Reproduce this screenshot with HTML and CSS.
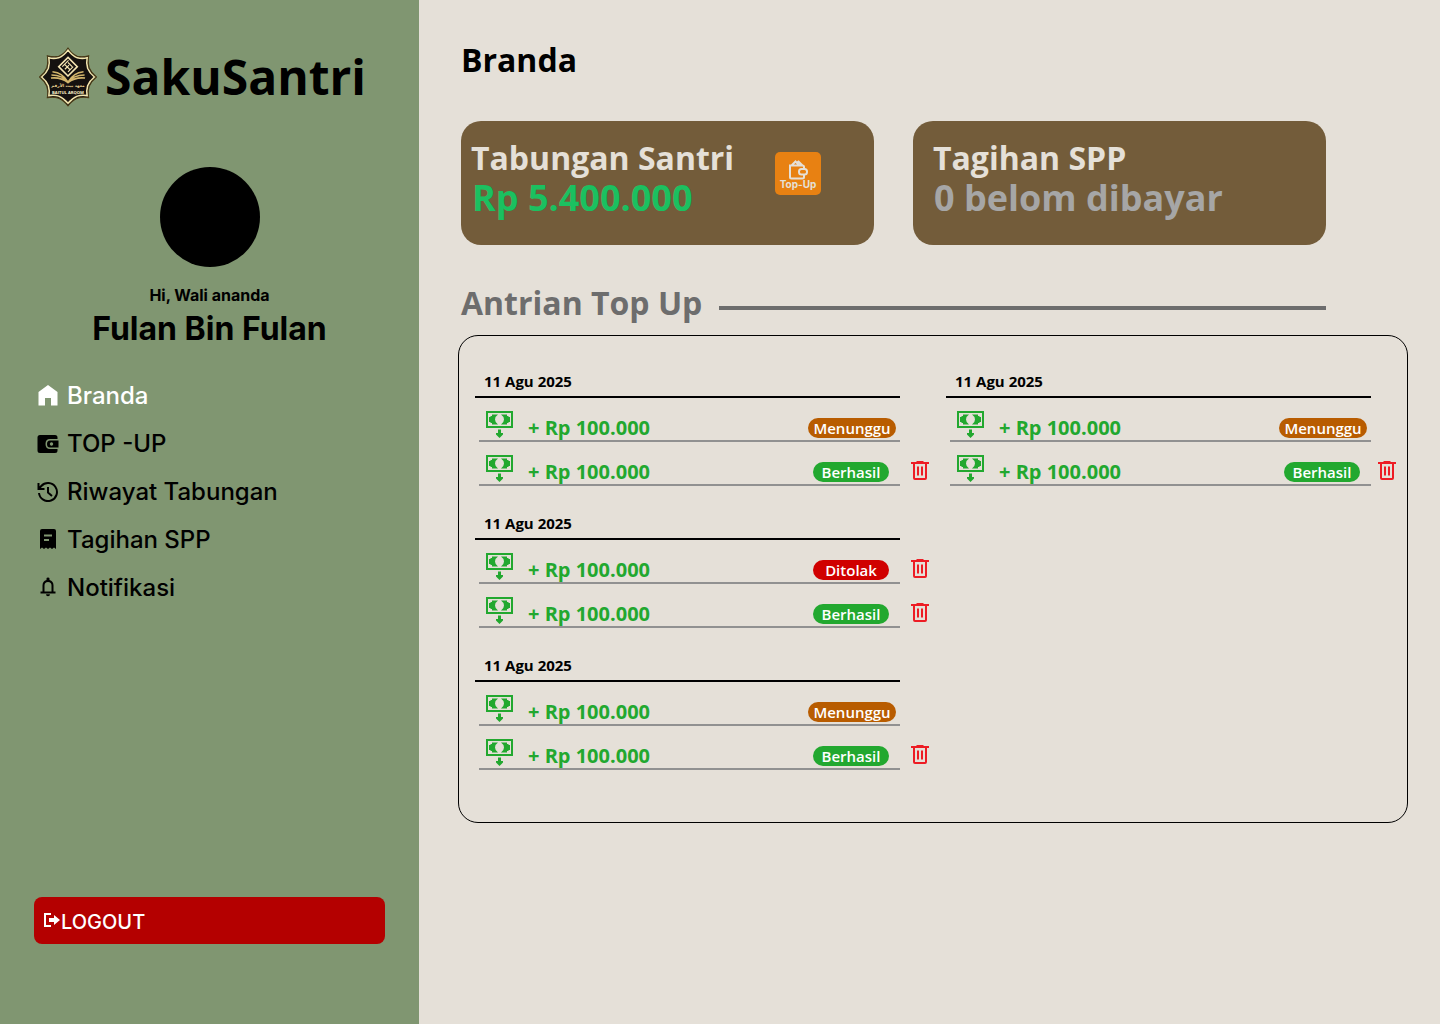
FILE: index.html
```html
<!DOCTYPE html>
<html lang="id">
<head>
<meta charset="utf-8">
<meta name="viewport" content="width=device-width, initial-scale=1">
<title>SakuSantri - Branda</title>
<link rel="stylesheet" href="styles.css">
</head>
<body>
<svg class="sprite" aria-hidden="true">
  <symbol id="money" viewBox="0 0 27 27">
    <path fill-rule="evenodd" d="M0 0h27v17H0zM2 2v13h23V2z"/>
    <path d="M6 3.500h6Q9 5.500 9 8.500T12 13.500H6V12H4.500V11H3V6h1.500V5H6zM21 3.500h-6q3 2 3 5t-3 5h6V12h1.500v-1H24V6h-1.500V5H21z"/>
    <path d="M12 18.500h3V22h2v1.500L13.500 27 10 23.500V22h2z"/>
  </symbol>
  <symbol id="trash" viewBox="0 0 18 19">
    <path fill-rule="evenodd" d="M0 1h5.500V0h7v1H18v2h-2v14q0 2-2 2H4q-2 0-2-2V3H0zM4 3v14h10V3z"/>
    <path d="M6 5.500h2v9H6zM10 5.500h2v9h-2z"/>
  </symbol>
</svg>
<div class="app">
  <aside class="sidebar">
    <div class="brand">
      <svg class="brand-logo" viewBox="0 0 56 58" role="img" aria-label="Baitul Arqom">
        <path d="M28 1Q32 7 37 9q5 1 11-.5-1 6 .5 11.500 2 5 7 9-5 4-7 9-1.500 5-.5 11-6-1-11 .5-5 2-9 7.500-4-5.500-9-7.500-5-1.500-11-.5 1-6-.5-11-2-5-7-9 5-4 7-9Q9 15 8 8.500 14 10 19 9q5-2 9-8z" fill="#15110f" stroke="#4a3b16" stroke-width="1"/>
        <path d="M28 3Q32 8.500 37 10.500q5 1 9.500 0-1 5 .5 10 2 5 6.500 8.500-4.500 3.500-6.500 8.500-1.500 5-.5 9.500-5-1-9.500.5-5 2-9 7-4-5-9-7-4.500-1.500-9.500-.5 1-4.500-.5-9.500-2-5-6.500-8.500 4.500-3.500 6.500-8.500 1.500-5 .5-10 4.500 1 9.500 0 5-2 9-7.500z" fill="none" stroke="#f4e6ad" stroke-width="1.500"/>
        <g fill="none" stroke="#f5e5b3" stroke-width="1.500">
          <path d="M28 10l9 9-9 9-9-9z"/>
          <path d="M22.500 19l6-6M25 21.500l4-4M28 24l5-5M28 15l4 4M25 17l5 5" stroke-width="1.100"/>
          <path d="M13 24q10 1 15 10 5-9 15-10M12 27q11 0 16 7 5-7 16-7M11.500 30q10-1 16.500 4.500Q34.500 29 44.500 30" stroke="#d3b56c"/>
        </g>
        <text class="logo-arabic" x="28" y="39">معهد بيت الأرقم</text>
        <text class="logo-latin" x="28" y="45">BAITUL ARQOM</text>
      </svg>
      <span class="brand-name">SakuSantri</span>
    </div>
    <div class="profile">
      <div class="avatar"></div>
      <p class="greeting">Hi, Wali ananda</p>
      <p class="user-name">Fulan Bin Fulan</p>
    </div>
    <nav class="nav">
      <a class="nav-link active" href="#branda">
        <svg viewBox="0 0 22 22"><path d="M11 1L1.500 8v13.500h6.500V14h6v7.500h6.500V8z"/></svg>Branda</a>
      <a class="nav-link" href="#top-up">
        <svg viewBox="0 0 22 22"><path d="M3 3h15q2.500 0 2.500 2.500V7H13q-4.500 0-4.500 5t4.500 5h7.500v1.500q0 2.500-2.500 2.500H3q-2.500 0-2.500-2.500v-13Q.5 3 3 3zM13 8.500h8.500v7H13q-3 0-3-3.500t3-3.500zM14.500 10.300a1.700 1.700 0 1 0 .01 0z" fill-rule="evenodd"/></svg>TOP -UP</a>
      <a class="nav-link" href="#riwayat">
        <svg viewBox="0 0 22 22" fill="none" stroke="currentColor" stroke-width="2"><path d="M2 13a9 9 0 1 0 2.300-7L2 8.500M1.500 3v6H7.500M11 7v5.500l4 3.500"/></svg>Riwayat Tabungan</a>
      <a class="nav-link" href="#tagihan">
        <svg viewBox="0 0 22 22"><path fill-rule="evenodd" d="M5 1h12q2 0 2 2v18l-2-1.500-2 1.500-2-1.500-2 1.500-2-1.500L7 21l-2-1.500L3 21V3q0-2 2-2zM7 6.500v2h8v-2zM7 11v2h5v-2z"/></svg>Tagihan SPP</a>
      <a class="nav-link" href="#notifikasi">
        <svg viewBox="0 0 22 22"><path fill-rule="evenodd" d="M3.500 15.500h2V9.500q0-4.500 4-5.500V2.500q0-1 1.500-1t1.500 1V4q4 1 4 5.500v6h2v2h-15zM7.500 15.500h7v-6Q14.500 6 11 6T7.500 9.500zM9 18.200h4q0 2-2 2t-2-2z"/></svg>Notifikasi</a>
    </nav>
    <button class="logout" type="button">
      <svg viewBox="0 0 16 14"><path d="M0 0h7v2H2v10h5v2H0z"/><path d="M5 5h5V2l6 5-6 5V9H5z"/></svg>LOGOUT</button>
  </aside>

  <main class="main">
    <h1 class="page-title">Branda</h1>
    <section class="cards">
      <article class="card">
        <div>
          <h2 class="card-title">Tabungan Santri</h2>
          <p class="card-value positive">Rp 5.400.000</p>
        </div>
        <button class="topup" type="button">
          <svg viewBox="0 0 20 20" fill="none" stroke="currentColor" stroke-width="2"><path d="M16 9V7q0-1.500-1.500-1.500H2V17q0 1.500 1.500 1.500h11Q16 18.500 16 17v-2M3.500 5.500l4-4 4 4M9 2.500l1.500-1 4 4"/><rect x="11" y="9" width="8" height="5.500" rx="2.500"/></svg>
          Top-Up</button>
      </article>
      <article class="card card-bill">
        <div>
          <h2 class="card-title">Tagihan SPP</h2>
          <p class="card-value muted">0 belom dibayar</p>
        </div>
      </article>
    </section>

    <h2 class="section-title">Antrian Top Up</h2>
    <div class="queue">
      <div class="column">
        <section class="group">
          <h3 class="date">11 Agu 2025</h3>
          <ul class="entries">
            <li class="row"><div class="entry"><svg class="money"><use href="#money"/></svg><span class="amount">+ Rp 100.000</span><span class="status waiting">Menunggu</span></div></li>
            <li class="row"><div class="entry"><svg class="money"><use href="#money"/></svg><span class="amount">+ Rp 100.000</span><span class="status success">Berhasil</span></div><button class="delete" type="button" aria-label="Hapus"><svg><use href="#trash"/></svg></button></li>
          </ul>
        </section>
        <section class="group">
          <h3 class="date">11 Agu 2025</h3>
          <ul class="entries">
            <li class="row"><div class="entry"><svg class="money"><use href="#money"/></svg><span class="amount">+ Rp 100.000</span><span class="status rejected">Ditolak</span></div><button class="delete" type="button" aria-label="Hapus"><svg><use href="#trash"/></svg></button></li>
            <li class="row"><div class="entry"><svg class="money"><use href="#money"/></svg><span class="amount">+ Rp 100.000</span><span class="status success">Berhasil</span></div><button class="delete" type="button" aria-label="Hapus"><svg><use href="#trash"/></svg></button></li>
          </ul>
        </section>
        <section class="group">
          <h3 class="date">11 Agu 2025</h3>
          <ul class="entries">
            <li class="row"><div class="entry"><svg class="money"><use href="#money"/></svg><span class="amount">+ Rp 100.000</span><span class="status waiting">Menunggu</span></div></li>
            <li class="row"><div class="entry"><svg class="money"><use href="#money"/></svg><span class="amount">+ Rp 100.000</span><span class="status success">Berhasil</span></div><button class="delete" type="button" aria-label="Hapus"><svg><use href="#trash"/></svg></button></li>
          </ul>
        </section>
      </div>
      <div class="column column-end">
        <section class="group">
          <h3 class="date">11 Agu 2025</h3>
          <ul class="entries">
            <li class="row"><div class="entry"><svg class="money"><use href="#money"/></svg><span class="amount">+ Rp 100.000</span><span class="status waiting">Menunggu</span></div></li>
            <li class="row"><div class="entry"><svg class="money"><use href="#money"/></svg><span class="amount">+ Rp 100.000</span><span class="status success">Berhasil</span></div><button class="delete" type="button" aria-label="Hapus"><svg><use href="#trash"/></svg></button></li>
          </ul>
        </section>
      </div>
    </div>
  </main>
</div>
</body>
</html>
```
FILE: styles.css
```css
* { box-sizing: border-box; margin: 0; padding: 0; }
body { font-family: "Open Sans", sans-serif; background: #e5e0d8; color: #000; }
button { font: inherit; border: 0; cursor: pointer; }
ul { list-style: none; }
svg { fill: currentColor; flex: none; }
svg[fill="none"] { fill: none; }
.sprite { display: none; }

.app { display: flex; min-height: 100vh; }

.sidebar {
  flex: 0 0 419px;
  display: flex;
  flex-direction: column;
  padding: 44px 34px 80px;
  background: #809671;
  font-family: Inter, sans-serif;
}
.brand { display: flex; align-items: center; gap: 8px; padding-left: 5px; }
.brand-logo { width: 58px; height: 60px; }
.brand-name { font: 700 48px/66px "Open Sans", sans-serif; }
.logo-arabic { font: 700 4px "DejaVu Sans", sans-serif; fill: #e6cf91; text-anchor: middle; }
.logo-latin { font: 700 4px "Open Sans", sans-serif; fill: #fff6cf; text-anchor: middle; }

.profile { display: flex; flex-direction: column; align-items: center; padding-top: 57px; }
.avatar { width: 100px; height: 100px; border-radius: 50%; background: #000; }
.greeting { margin-top: 18px; font-size: 16px; font-weight: 700; line-height: 20px; }
.user-name { margin-top: 4px; font-size: 32px; font-weight: 700; line-height: 40px; }

.nav { display: flex; flex-direction: column; margin: 22px 0 32px; }
.nav-link {
  display: flex;
  align-items: center;
  gap: 8px;
  height: 48px;
  padding-left: 3px;
  font-size: 24px;
  font-weight: 500;
  color: #000;
  text-decoration: none;
}
.nav-link svg { width: 22px; height: 22px; }
.nav-link.active { color: #fff; }

.logout {
  display: flex;
  align-items: center;
  gap: 1px;
  height: 47px;
  margin-top: auto;
  padding: 2px 10px 0;
  border-radius: 8px;
  background: #b40000;
  color: #fff;
  font-size: 20px;
  font-weight: 500;
}
.logout svg { width: 16px; height: 14px; margin-bottom: 4px; }

.main { flex: 1; min-width: 0; padding: 38px 32px 32px 39px; }
.page-title { padding-left: 3px; font-size: 32px; line-height: 44px; }

.cards { display: grid; grid-template-columns: 1fr 1fr; gap: 39px; padding: 39px 82px 0 3px; }
.card {
  display: flex;
  align-items: flex-start;
  justify-content: space-between;
  min-height: 124px;
  padding: 16px 53px 16px 10px;
  border-radius: 20px;
  background: #735c3a;
}
.card-bill { padding-left: 20px; padding-right: 20px; }
.card-title { font-size: 32px; line-height: 42px; color: #e5e0d8; }
.card-value { padding-left: 1px; font-size: 36px; font-weight: 700; line-height: 38px; }
.positive { color: #1bc060; }
.muted { color: #a6a6a6; }
.topup {
  display: flex;
  flex-direction: column;
  align-items: center;
  width: 46px;
  height: 43px;
  margin-top: 15px;
  padding-top: 8px;
  border-radius: 5px;
  background: #e88112;
  color: #e5e0d8;
  font: 700 10px/8px Inter, sans-serif;
}
.topup svg { width: 20px; height: 20px; }

.section-title {
  display: flex;
  align-items: center;
  gap: 17px;
  padding: 36px 82px 10px 3px;
  font-size: 32px;
  line-height: 44px;
  color: #6d6d6d;
}
.section-title::after { content: ""; flex: 1; height: 4px; margin-top: 10px; background: #6d6d6d; }

.queue {
  display: grid;
  grid-template-columns: 454fr 450fr;
  gap: 17px;
  padding: 24px 11px 52px 16px;
  border: 1px solid #000;
  border-radius: 20px;
}
.column { --action-gap: 11px; display: flex; flex-direction: column; gap: 16px; }
.column-end { --action-gap: 7px; }
.date {
  height: 38px;
  margin-right: calc(18px + var(--action-gap));
  padding: 11px 9px 0;
  border-bottom: 2px solid #000;
  font-size: 15px;
  line-height: 20px;
}
.row {
  display: grid;
  grid-template-columns: 1fr 18px;
  column-gap: var(--action-gap);
  height: 44px;
  padding-left: 4px;
}
.entry { display: flex; align-items: flex-end; border-bottom: 2px solid #919191; padding: 0 4px 2px 7px; }
.money { width: 27px; height: 27px; color: #22a82f; }
.amount { margin-left: 15px; font-size: 20px; font-weight: 700; line-height: 20px; color: #22a82f; }
.status {
  width: 76px;
  height: 20px;
  margin: 0 7px 0 auto;
  border-radius: 10px;
  font-size: 15px;
  font-weight: 600;
  line-height: 20px;
  text-align: center;
  color: #fff;
}
.waiting { width: 88px; margin-right: 0; background: #b85c00; }
.success { background: #22a82f; }
.rejected { background: #d00000; }
.delete { align-self: start; height: 19px; margin-top: 19px; background: none; color: #ed1c24; }
.delete svg { display: block; width: 18px; height: 19px; }
```
